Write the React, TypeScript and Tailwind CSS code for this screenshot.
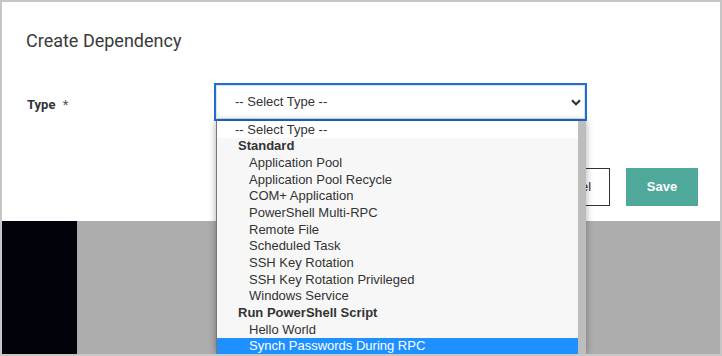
const ITEMS: { label: string; kind: "placeholder" | "group" | "option"; active?: boolean }[] = [
  { label: "-- Select Type --", kind: "placeholder" },
  { label: "Standard", kind: "group" },
  { label: "Application Pool", kind: "option" },
  { label: "Application Pool Recycle", kind: "option" },
  { label: "COM+ Application", kind: "option" },
  { label: "PowerShell Multi-RPC", kind: "option" },
  { label: "Remote File", kind: "option" },
  { label: "Scheduled Task", kind: "option" },
  { label: "SSH Key Rotation", kind: "option" },
  { label: "SSH Key Rotation Privileged", kind: "option" },
  { label: "Windows Service", kind: "option" },
  { label: "Run PowerShell Script", kind: "group" },
  { label: "Hello World", kind: "option" },
  { label: "Synch Passwords During RPC", kind: "option", active: true },
];

function Chevron() {
  return (
    <svg width="10" height="7" viewBox="0 0 10 7" className="text-[#333]">
      <path d="M1 1.2 L5 5.2 L9 1.2" fill="none" stroke="currentColor" strokeWidth="2.2" />
    </svg>
  );
}

export default function App() {
  return (
    <div className="relative h-[356px] w-[722px] overflow-hidden border-2 border-[#c6c6c6] bg-white font-['Roboto',sans-serif] text-[#333]">
      <div className="flex h-full flex-col">
        {/* modal */}
        <div className="h-[219px] bg-white pl-6 pr-[22px]">
          <div className="pt-[27px] text-[18px] leading-6 text-[#3a3a3a]">Create Dependency</div>

          <div className="mt-[30px] flex">
            <div className="w-[188px] pt-[14px] pl-px text-[13px] leading-4 font-bold text-[#333]">
              Type <span className="ml-1 font-normal text-[#555]">*</span>
            </div>
            <div className="flex h-[38px] w-[373px] items-center justify-between border-2 border-[#1b6fd6] bg-white pl-[19px] pr-[4px] shadow-[inset_0_0_0_1px_#e2e2e2] font-['Liberation_Sans',Arial,sans-serif] text-[13px] text-[#333]">
              <span>-- Select Type --</span>
              <Chevron />
            </div>
          </div>

          <div className="mt-[47px] flex justify-end gap-4">
            <button className="h-[38px] w-[78px] border border-[#333] bg-white text-[13px] text-[#333] font-['Liberation_Sans',Arial,sans-serif]">
              Cancel
            </button>
            <button className="h-[38px] w-[72px] bg-[#4fa99a] text-[13px] font-bold text-white font-['Liberation_Sans',Arial,sans-serif]">
              Save
            </button>
          </div>
        </div>

        {/* backdrop below */}
        <div className="flex flex-1">
          <div className="w-[75px] bg-[#02020a]" />
          <div className="flex-1 bg-[#adadad]" />
        </div>
      </div>

      {/* open select list */}
      <div className="absolute left-[214px] top-[119px] flex w-[370px] shadow-[0_0_7px_rgba(0,0,0,0.35)] font-['Liberation_Sans',Arial,sans-serif] text-[13px]">
        <div className="flex-1 border-l border-[#777] bg-[#f7f7f7]">
          {ITEMS.map((it) => (
            <div
              key={it.label}
              className={
                "flex h-[16.67px] items-center whitespace-nowrap leading-none " +
                (it.active ? "bg-[#1e90ff] text-white " : it.kind === "placeholder" ? "bg-white text-[#333] " : "text-[#333] ") +
                (it.kind === "placeholder" ? "pl-[18px]" : it.kind === "group" ? "pl-[21px] font-bold" : "pl-[32px]")
              }
            >
              {it.label}
            </div>
          ))}
        </div>
        <div className="w-[8px] bg-[#bdbdbd]" />
      </div>
    </div>
  );
}
